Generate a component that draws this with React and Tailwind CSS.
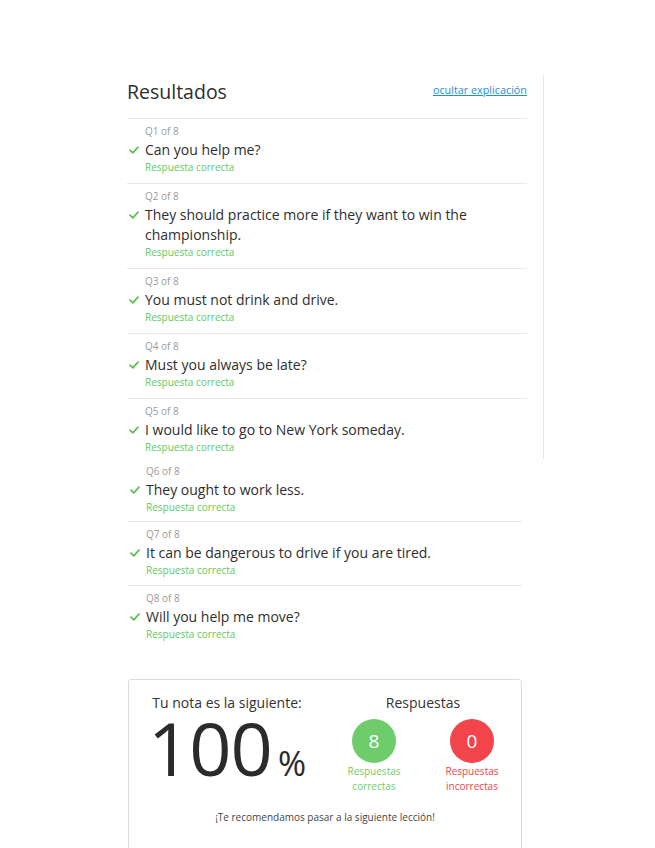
import React from "react"

const questions = [
  { n: 1, text: "Can you help me?" },
  { n: 2, text: "They should practice more if they want to win the championship." },
  { n: 3, text: "You must not drink and drive." },
  { n: 4, text: "Must you always be late?" },
  { n: 5, text: "I would like to go to New York someday." },
  { n: 6, text: "They ought to work less." },
  { n: 7, text: "It can be dangerous to drive if you are tired." },
  { n: 8, text: "Will you help me move?" },
]

function Check() {
  return (
    <svg width="10" height="8" viewBox="0 0 10 8" className="shrink-0">
      <polyline points="1,4.2 3.8,6.8 9,1.2" fill="none" stroke="#62bf57" strokeWidth="1.8" strokeLinecap="round" strokeLinejoin="round" />
    </svg>
  )
}

function QuestionRow({ q, last, bottom = "pb-[9px]" }) {
  return (
    <div className={`pt-[5px] ${bottom} ${last ? "" : "border-b border-[#e8e8e8]"}`}>
      <div className="pl-[18px] text-[10px] leading-[14px] text-[#9a9a9a]">Q{q.n} of 8</div>
      <div className="mt-[2px] flex items-start">
        <div className="w-[18px] h-[20px] shrink-0 flex items-center pl-[2px]">
          <Check />
        </div>
        <div className="text-[14px] leading-[20px] text-[#2e2e2e] pr-12">{q.text}</div>
      </div>
      <div className="pl-[18px] text-[10px] leading-[14px] text-[#5fca62]">Respuesta correcta</div>
    </div>
  )
}

export default function App() {
  const first = questions.slice(0, 5)
  const second = questions.slice(5)

  return (
    <div className="min-h-[848px] bg-white pt-[75px] pl-[127px] font-['Open_Sans',sans-serif]">
      <div className="w-[417px] border-r border-[#e6e6e6] pr-4">
        <div className="h-[44px] pb-[10px] flex items-center justify-between border-b border-[#e8e8e8]">
          <h1 className="text-[19.5px] text-[#2e2e2e] font-normal">Resultados</h1>
          <a href="#" className="text-[10.8px] text-[#1d8fd8] underline mb-[2px]">ocultar explicación</a>
        </div>
        {first.map((q, i) => (
          <QuestionRow key={q.n} q={q} last={i === first.length - 1} bottom={i === first.length - 1 ? "pb-[5px]" : "pb-[9px]"} />
        ))}
      </div>

      <div className="w-[394px] ml-px">
        {second.map((q, i) => (
          <QuestionRow key={q.n} q={q} last={i === second.length - 1} bottom={i === 0 ? "pb-[7px]" : "pb-[8px]"} />
        ))}
      </div>

      <div className="mt-[30px] ml-px w-[394px] h-[180px] border border-[#dcdcdc] rounded-[3px]">
        <div className="grid grid-cols-2">
          <div className="flex flex-col items-center pt-[13px]">
            <div className="text-[14px] leading-[20px] text-[#333]">Tu nota es la siguiente:</div>
            <div className="flex items-baseline text-[#2b2b2b]">
              <span className="text-[74px] leading-[70px] tracking-[-1px]">100</span>
              <span className="text-[34px] leading-[34px] ml-[6px]">%</span>
            </div>
          </div>
          <div className="flex flex-col items-center pt-[13px]">
            <div className="text-[14px] leading-[20px] text-[#333]">Respuestas</div>
            <div className="grid grid-cols-2 w-full mt-[6px]">
              <div className="flex flex-col items-center">
                <div className="w-[44px] h-[44px] rounded-full bg-[#6fcc6b] flex items-center justify-center text-white text-[19px]">8</div>
                <div className="text-[10px] leading-[15px] text-[#6fcc6b] text-center mt-[1px]">Respuestas<br />correctas</div>
              </div>
              <div className="flex flex-col items-center">
                <div className="w-[44px] h-[44px] rounded-full bg-[#f2454b] flex items-center justify-center text-white text-[19px]">0</div>
                <div className="text-[10px] leading-[15px] text-[#f2454b] text-center mt-[1px]">Respuestas<br />incorrectas</div>
              </div>
            </div>
          </div>
        </div>
        <div className="text-center text-[10px] leading-[14px] text-[#444] mt-[16px]">¡Te recomendamos pasar a la siguiente lección!</div>
      </div>
    </div>
  )
}
